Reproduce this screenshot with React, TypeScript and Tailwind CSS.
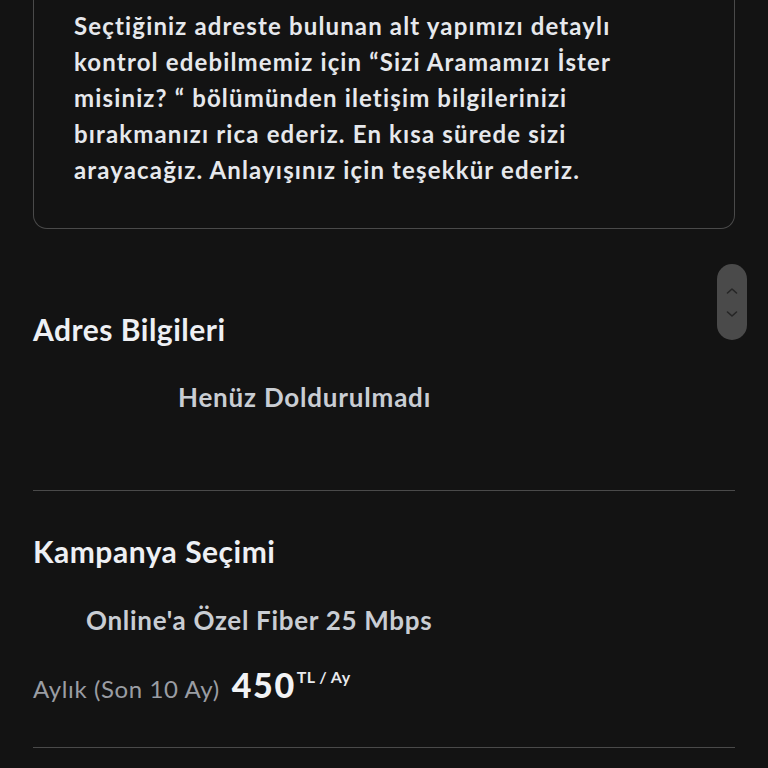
import React from "react";

export default function App() {
  return (
    <div className="relative h-[768px] w-[768px] overflow-hidden bg-[#131313] text-[#e8eaee]" style={{ fontFamily: "Lato, 'Noto Sans', sans-serif" }}>
      <div className="px-[33px]">
        <div className="-mt-[20px] rounded-b-[14px] border border-t-0 border-[#4a4a4a] pl-[40px] pr-[40px] pt-[28px] pb-[40px]">
          <p className="max-w-[565px] text-[24px] font-bold leading-[36px] tracking-[1.15px] text-[#e6e8ec]">
            Seçtiğiniz adreste bulunan alt yapımızı detaylı kontrol edebilmemiz için “Sizi Aramamızı İster misiniz? “ bölümünden iletişim bilgilerinizi bırakmanızı rica ederiz. En kısa sürede sizi arayacağız. Anlayışınız için teşekkür ederiz.
          </p>
        </div>

        <section className="pt-[80px]">
          <h2 className="text-[30px] font-bold leading-[40px] tracking-[0.5px] text-[#eef0f4]">Adres Bilgileri</h2>
          <div className="pl-[145px] pt-[32px] pb-[77px] text-[26px] font-bold leading-[32px] tracking-[0.8px] text-[#c9cdd3]">Henüz Doldurulmadı</div>
        </section>
        <div className="h-px bg-[#4a4a4a]" />

        <section className="pt-[40px]">
          <h2 className="text-[30px] font-bold leading-[40px] tracking-[0.5px] text-[#eef0f4]">Kampanya Seçimi</h2>
          <div className="pl-[53px] pt-[33px] text-[26px] font-bold leading-[32px] tracking-[0.7px] text-[#c9cdd3]">Online'a Özel Fiber 25 Mbps</div>
          <div className="flex items-baseline pt-[33px] pb-[42px]">
            <span className="text-[24px] leading-[32px] tracking-[0.6px] text-[#9a9da3]">Aylık (Son 10 Ay)</span>
            <span className="ml-[12px] text-[34px] font-black leading-[32px] tracking-[1.6px] text-[#f2f3f5]">450</span>
            <span className="relative -top-[15px] ml-[1px] text-[16px] font-bold tracking-[0.4px] text-[#e8eaee]">TL / Ay</span>
          </div>
        </section>
        <div className="h-px bg-[#4a4a4a]" />
      </div>

      <div className="absolute left-[717px] top-[264px] flex h-[76px] w-[30px] flex-col items-center justify-center gap-[15px] rounded-full bg-[#4a4a4a]">
        <svg width="12" height="8" viewBox="0 0 12 8" fill="none" stroke="#262626" strokeWidth="1.6" strokeLinecap="round" strokeLinejoin="round"><path d="M1.5 6 L6 2 L10.5 6" /></svg>
        <svg width="12" height="8" viewBox="0 0 12 8" fill="none" stroke="#262626" strokeWidth="1.6" strokeLinecap="round" strokeLinejoin="round"><path d="M1.5 2 L6 6 L10.5 2" /></svg>
      </div>
    </div>
  );
}
